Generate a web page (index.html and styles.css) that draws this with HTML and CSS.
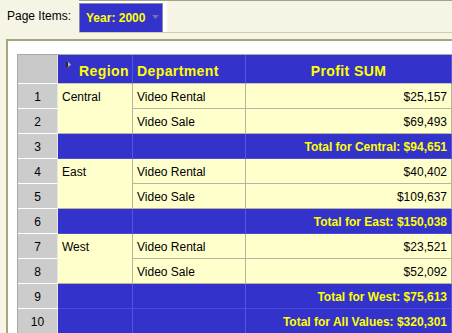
FILE: index.html
```html
<!DOCTYPE html>
<html>
<head>
<meta charset="utf-8">
<link rel="stylesheet" href="styles.css">
</head>
<body>
<div class="toolbar">
  <span class="label">Page Items:</span>
  <div class="pageitems">
    <div class="ddwrap">
      <div class="dropdown">
        <span>Year: 2000</span>
        <svg class="arrow" width="7" height="4" viewBox="0 0 7 4"><polygon points="0,0 7,0 3.5,4" fill="#76769a"/></svg>
      </div>
    </div>
  </div>
</div>
<div class="frame">
  <table class="grid">
    <colgroup>
      <col class="c-num"><col class="c-region"><col class="c-dept"><col class="c-profit">
    </colgroup>
    <tr class="head">
      <td class="num corner"></td>
      <td class="hcell"><svg class="tri" width="5" height="9" viewBox="0 0 5 9"><polygon points="0,0 5,4.5 0,9" fill="#b4b4b4"/><polygon points="0,0 2,2 2,7 0,9" fill="#2a2a2a"/></svg>Region</td>
      <td class="hcell">Department</td>
      <td class="hcell center">Profit SUM</td>
    </tr>
    <tr>
      <td class="num">1</td>
      <td class="data region" rowspan="2">Central</td>
      <td class="data">Video Rental</td>
      <td class="data right">$25,157</td>
    </tr>
    <tr>
      <td class="num">2</td>
      <td class="data">Video Sale</td>
      <td class="data right">$69,493</td>
    </tr>
    <tr>
      <td class="num">3</td>
      <td class="blue"></td>
      <td class="blue"></td>
      <td class="blue total">Total for Central: $94,651</td>
    </tr>
    <tr>
      <td class="num">4</td>
      <td class="data region" rowspan="2">East</td>
      <td class="data">Video Rental</td>
      <td class="data right">$40,402</td>
    </tr>
    <tr>
      <td class="num">5</td>
      <td class="data">Video Sale</td>
      <td class="data right">$109,637</td>
    </tr>
    <tr>
      <td class="num">6</td>
      <td class="blue"></td>
      <td class="blue"></td>
      <td class="blue total">Total for East: $150,038</td>
    </tr>
    <tr>
      <td class="num">7</td>
      <td class="data region" rowspan="2">West</td>
      <td class="data">Video Rental</td>
      <td class="data right">$23,521</td>
    </tr>
    <tr>
      <td class="num">8</td>
      <td class="data">Video Sale</td>
      <td class="data right">$52,092</td>
    </tr>
    <tr>
      <td class="num">9</td>
      <td class="blue"></td>
      <td class="blue"></td>
      <td class="blue total">Total for West: $75,613</td>
    </tr>
    <tr>
      <td class="num">10</td>
      <td class="blue"></td>
      <td class="blue"></td>
      <td class="blue total">Total for All Values: $320,301</td>
    </tr>
  </table>
</div>
</body>
</html>
```

FILE: styles.css
```css
html, body {
  margin: 0;
  padding: 0;
}
body {
  width: 452px;
  height: 333px;
  overflow: hidden;
  background: #f5f4e5;
  font-family: "Liberation Sans", Arial, sans-serif;
  font-size: 12px;
  color: #000;
}
.toolbar {
  display: flex;
  align-items: stretch;
  height: 33px;
  padding-left: 7px;
}
.label {
  align-self: center;
  line-height: 15px;
  margin-right: 8px;
}
.pageitems {
  flex: 1;
  display: flex;
  border-top: 1px solid #a2a286;
  border-bottom: 1px solid #d2ce9e;
}
.ddwrap {
  background: #ffffff;
  padding: 2px 4px 0 0;
  display: flex;
}
.dropdown {
  display: flex;
  align-items: center;
  gap: 7px;
  background: #3333cc;
  border: 1px solid #8a8aa4;
  border-bottom: none;
  padding: 0 3px 0 6px;
  color: #ffff00;
  font-weight: bold;
  line-height: 15px;
}
.arrow {
  display: block;
  margin-top: -2px;
}
.frame {
  margin: 6px 0 0 6px;
  border-left: 2px solid #a6a680;
  border-top: 2px solid #a6a680;
  background: #ffffff;
  padding: 13px 0 0 9px;
  height: 279px;
  overflow: hidden;
}
.grid {
  table-layout: fixed;
  width: 435px;
  border-collapse: separate;
  border-spacing: 0;
  border-top: 1px solid #a8a8a8;
  border-left: 1px solid #a8a8a8;
}
.c-num { width: 40px; }
.c-region { width: 75px; }
.c-dept { width: 113px; }
.c-profit { width: 206px; }
.grid td {
  padding: 3px 4px 0 4px;
  line-height: 21px;
  white-space: nowrap;
  overflow: hidden;
  vertical-align: top;
}
.num {
  background: #cccccc;
  text-align: center;
  border-right: 1px solid #e6e6e6;
  border-bottom: 1px solid #ffffff;
}
.corner {
  background: #c8c8c8;
}
.head td {
  padding-top: 4px;
  line-height: 24px;
}
.hcell {
  background: #3333cc;
  color: #ffff00;
  font-weight: bold;
  font-size: 14px;
  letter-spacing: 0.4px;
  border-right: 1px solid #5555dd;
  border-bottom: 1px solid #c4c4c4;
}
.tri {
  display: inline-block;
  vertical-align: 7px;
  margin: 0 8px 0 4px;
}
.center { text-align: center; }
.data {
  background: #ffffcc;
  border-right: 1px solid #b4b4a0;
  border-bottom: 1px solid #b4b4a0;
}
.right { text-align: right; }
.blue {
  background: #3333cc;
  border-right: 1px solid #5555dd;
  border-bottom: 1px solid #4a4ad6;
}
.total {
  color: #ffff00;
  font-weight: bold;
  text-align: right;
}
```
